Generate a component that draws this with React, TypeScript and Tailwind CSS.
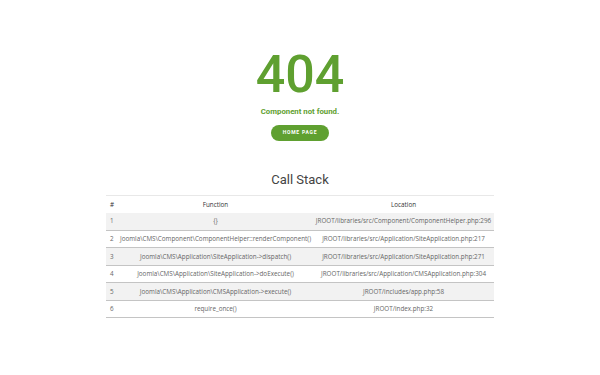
import React from "react";

const rows: [string, string, string][] = [
  ["1", "{}", "JROOT/libraries/src/Component/ComponentHelper.php:296"],
  ["2", "Joomla\\CMS\\Component\\ComponentHelper::renderComponent()", "JROOT/libraries/src/Application/SiteApplication.php:217"],
  ["3", "Joomla\\CMS\\Application\\SiteApplication->dispatch()", "JROOT/libraries/src/Application/SiteApplication.php:271"],
  ["4", "Joomla\\CMS\\Application\\SiteApplication->doExecute()", "JROOT/libraries/src/Application/CMSApplication.php:304"],
  ["5", "Joomla\\CMS\\Application\\CMSApplication->execute()", "JROOT/includes/app.php:58"],
  ["6", "require_once()", "JROOT/index.php:32"],
];

export default function App() {
  return (
    <div className="w-[600px] h-[375px] bg-white flex flex-col items-center pt-[49px]" style={{ fontFamily: "Roboto, sans-serif" }}>
      <div className="text-[52px] leading-[52px] font-medium text-[#5fa030]">404</div>
      <div className="mt-[6px] text-[7.8px] leading-[10px] font-bold text-[#5fa030]">Component not found.</div>
      <div className="mt-[8px] w-[58px] h-[16px] rounded-full bg-[#5fa030] flex items-center justify-center text-white text-[5px] font-bold tracking-[0.15em]">
        HOME PAGE
      </div>
      <div className="mt-[31px] text-[13px] leading-[16px] text-[#444]">Call Stack</div>
      <table
        className="mt-[7px] w-[388px] border-collapse table-fixed text-[6.3px] text-[#666]"
        style={{ fontFamily: "'Open Sans', sans-serif" }}
      >
        <colgroup>
          <col className="w-[12px]" />
          <col className="w-[195px]" />
          <col className="w-[181px]" />
        </colgroup>
        <thead>
          <tr className="h-[17px] border-t border-[#e8e8e8] text-[#333]">
            <th className="text-left pl-[4px] font-normal">#</th>
            <th className="text-center font-normal">Function</th>
            <th className="text-center font-normal">Location</th>
          </tr>
        </thead>
        <tbody>
          {rows.map((r, i) => (
            <tr key={r[0]} className={`h-[17.5px] border-b border-[#c4c4c4] ${i % 2 === 0 ? "bg-[#f2f2f2]" : "bg-white"}`}>
              <td className="text-left pl-[4px] whitespace-nowrap">{r[0]}</td>
              <td className="text-center whitespace-nowrap">{r[1]}</td>
              <td className="text-center whitespace-nowrap">{r[2]}</td>
            </tr>
          ))}
        </tbody>
      </table>
    </div>
  );
}
